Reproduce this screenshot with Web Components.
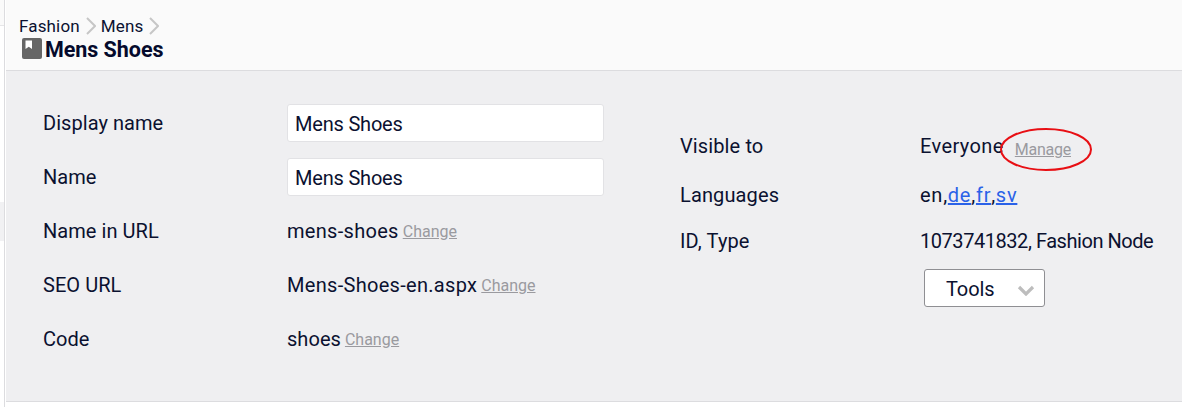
<!DOCTYPE html>
<html><head><meta charset="utf-8"><style>
html,body{margin:0;padding:0;background:#fff}
body{width:1182px;height:407px;overflow:hidden;font-family:Roboto,"Liberation Sans",sans-serif;color:#0b1130}
</style></head><body>
<app-shell>
  <page-head slot="head"></page-head>
  <form-row label="Display name"><text-box>Mens Shoes</text-box></form-row>
  <form-row label="Name"><text-box>Mens Shoes</text-box></form-row>
  <form-row label="Name in URL"><span style="letter-spacing:.3px">mens-shoes</span> <change-link>Change</change-link></form-row>
  <form-row label="SEO URL"><span style="letter-spacing:.3px">Mens-Shoes-en.aspx</span> <change-link>Change</change-link></form-row>
  <form-row label="Code"><span>shoes</span> <change-link>Change</change-link></form-row>
  <info-panel slot="right"></info-panel>
</app-shell>
<script>
function def(name,html){customElements.define(name,class extends HTMLElement{
  constructor(){super();this.attachShadow({mode:'open'}).innerHTML=html;}
  connectedCallback(){const l=this.shadowRoot.querySelector('[data-label]');if(l)l.textContent=this.getAttribute('label')||'';}
});}
def('app-shell',`<style>
:host{display:grid;grid-template-columns:5px 1fr;height:407px}
.rail{border-right:1px solid #dcdcdf;background:#fff;display:flex;flex-direction:column;box-sizing:content-box}
.rail i{display:block}
.r1{height:25px;background:#fafafa;border-bottom:1px solid #e6e6e8}
.r2{height:176px}
.r3{height:39px;background:#f1f1f3}
main{display:flex;flex-direction:column;min-width:0;margin-left:1px}
.body{height:331px;box-sizing:border-box;background:#efeff1;border-bottom:1px solid #dcdcdf;display:grid;grid-template-columns:674px 1fr}
.left{padding:33px 0 0 37px;display:flex;flex-direction:column;gap:16px}
</style>
<div class="rail"><i class="r1"></i><i class="r2"></i><i class="r3"></i></div>
<main><slot name="head"></slot>
<div class="body"><div class="left"><slot></slot></div><slot name="right"></slot></div></main>`);
def('page-head',`<style>
:host{display:block;height:71px;box-sizing:border-box;background:#fafafa;border-bottom:1px solid #dcdcdf;padding:16px 0 0 13px}
.crumbs{display:flex;align-items:center;height:20px;font-size:17px;letter-spacing:.15px;gap:5px}
.title{display:flex;align-items:center;height:24px;margin-top:1px;font-size:21.5px;font-weight:700;letter-spacing:-.05px;gap:4px;color:#050a2c}
svg{display:block}
.book{margin-left:3px;margin-right:-1px}
</style>
<div class="crumbs"><span>Fashion</span><svg width="11" height="20" viewBox="0 0 11 20"><path d="M2 2l8 8-8 8" fill="none" stroke="#c6c6c6" stroke-width="2"/></svg><span>Mens</span><svg width="11" height="20" viewBox="0 0 11 20"><path d="M2 2l8 8-8 8" fill="none" stroke="#c6c6c6" stroke-width="2"/></svg></div>
<div class="title"><svg class="book" width="20" height="22" viewBox="0 0 20 22"><rect x="0" y="0" width="20" height="21" rx="2" fill="#666"/><path d="M3.5 2.5h6.5v8.5l-3.2-2.3-3.3 2.3z" fill="#fff"/></svg><span>Mens Shoes</span></div>`);
def('form-row',`<style>
:host{display:grid;grid-template-columns:244px 1fr;align-items:center;height:38px;font-size:20px;letter-spacing:.05px}
</style><div data-label></div><div><slot></slot></div>`);
def('text-box',`<style>
:host{display:flex;align-items:center;box-sizing:border-box;width:317px;height:38px;background:#fff;border:1px solid #e2e2e5;border-radius:3px;padding:2px 0 0 7px;font-size:20px;letter-spacing:-.2px}
</style><slot></slot>`);
def('change-link',`<style>
:host{color:#9a9a9f;font-size:16px;letter-spacing:0;text-decoration:underline;vertical-align:1px;margin-left:-1px}
</style><slot></slot>`);
def('info-panel',`<style>
:host{display:block;position:relative;font-size:20px;padding-top:0}
.rows{display:grid;grid-template-columns:240px 1fr;grid-template-rows:auto auto auto;padding-top:63px}
.rows div{display:flex;align-items:center;white-space:pre;height:24px}
.l{letter-spacing:.12px}
.r2{margin-top:25px}
.r3{margin-top:22px}
a{color:#2a62e8;text-decoration:underline}
.m{color:#9a9a9f;font-size:16px;letter-spacing:-.25px;text-decoration:underline;margin:7px 0 0 11px}
button{all:unset;box-sizing:border-box;display:flex;align-items:center;width:121px;height:38px;margin:16px 0 0 244px;background:#fff;border:1px solid #8f8f93;border-radius:3px;padding:2px 0 0 21px;font-size:20px;letter-spacing:-.1px;position:relative}
button svg{position:absolute;left:92px;top:15px}
.ring{position:absolute;left:320px;top:57px}
</style>
<div class="rows"><div class="l">Visible to</div><div><span style="letter-spacing:.4px">Everyone</span><span class="m">Manage</span></div>
<div class="l r2">Languages</div><div class="r2" style="letter-spacing:.75px">en,<a>de</a>,<a>fr</a>,<a>sv</a></div>
<div class="l r3">ID, Type</div><div class="r3" style="letter-spacing:-.45px">1073741832, Fashion Node</div></div>
<button>Tools<svg width="18" height="11" viewBox="0 0 18 11"><path d="M2 2l7 7 7-7" fill="none" stroke="#bdbdbd" stroke-width="3.2"/></svg></button>
<svg class="ring" width="92" height="43" viewBox="0 0 92 43"><ellipse cx="46" cy="21.5" rx="45" ry="20.5" fill="none" stroke="#e80f14" stroke-width="2"/></svg>`);
</script>
</body></html>
